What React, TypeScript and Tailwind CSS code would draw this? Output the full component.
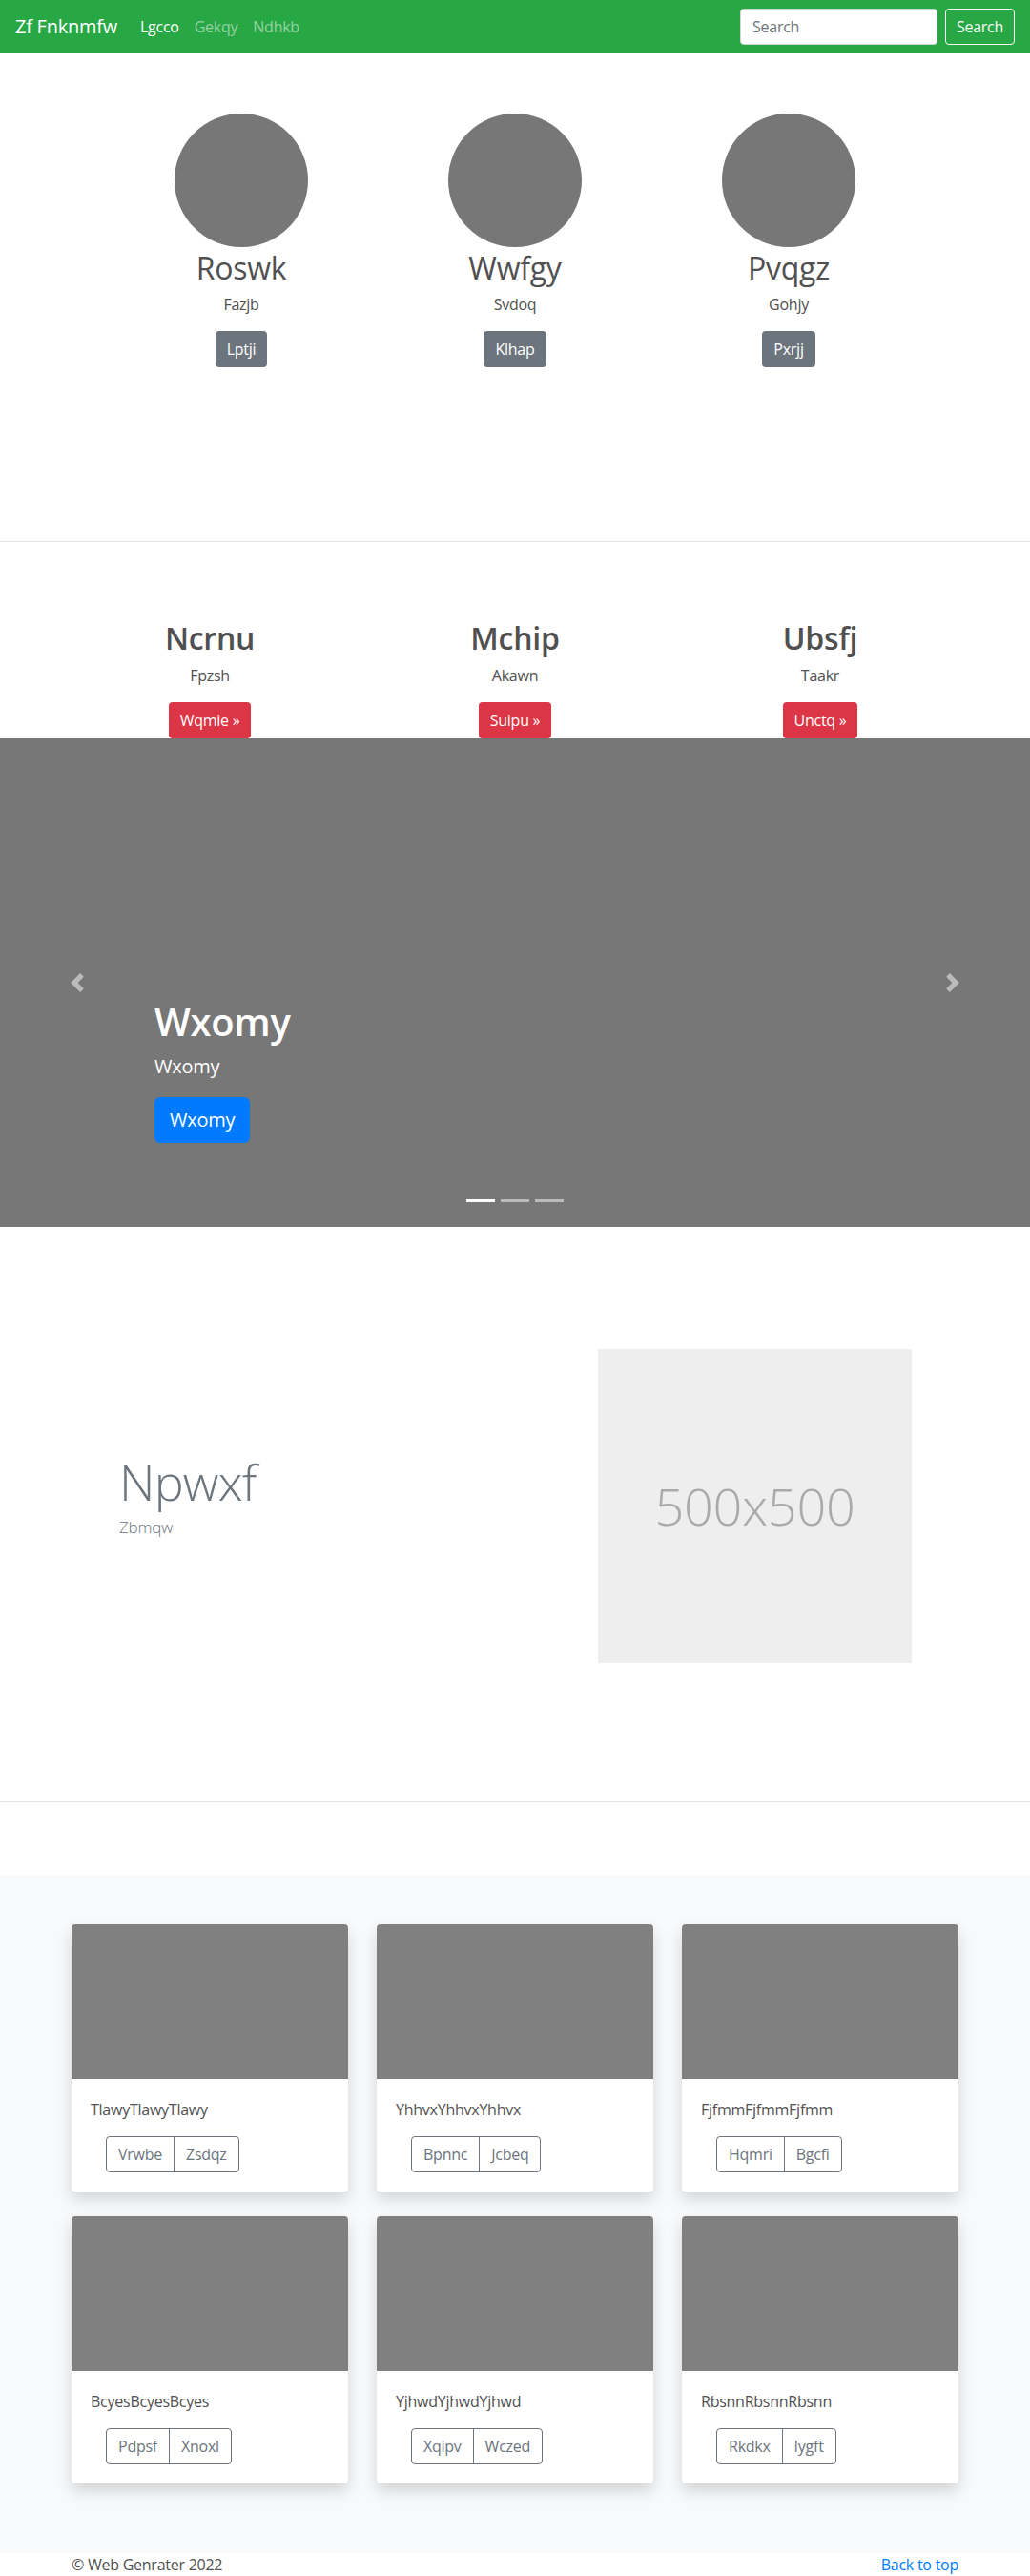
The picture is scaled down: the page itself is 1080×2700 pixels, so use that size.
import React from 'react';

const team = [
  { name: 'Roswk', sub: 'Fazjb', btn: 'Lptji' },
  { name: 'Wwfgy', sub: 'Svdoq', btn: 'Klhap' },
  { name: 'Pvqgz', sub: 'Gohjy', btn: 'Pxrjj' },
];

const features = [
  { title: 'Ncrnu', sub: 'Fpzsh', btn: 'Wqmie »' },
  { title: 'Mchip', sub: 'Akawn', btn: 'Suipu »' },
  { title: 'Ubsfj', sub: 'Taakr', btn: 'Unctq »' },
];

const cards = [
  { text: 'TlawyTlawyTlawy', a: 'Vrwbe', b: 'Zsdqz' },
  { text: 'YhhvxYhhvxYhhvx', a: 'Bpnnc', b: 'Jcbeq' },
  { text: 'FjfmmFjfmmFjfmm', a: 'Hqmri', b: 'Bgcfi' },
  { text: 'BcyesBcyesBcyes', a: 'Pdpsf', b: 'Xnoxl' },
  { text: 'YjhwdYjhwdYjhwd', a: 'Xqipv', b: 'Wczed' },
  { text: 'RbsnnRbsnnRbsnn', a: 'Rkdkx', b: 'Iygft' },
];

function Chevron({ dir }: { dir: 'prev' | 'next' }) {
  return (
    <svg width="20" height="20" viewBox="0 0 8 8" fill="#fff">
      {dir === 'prev' ? (
        <path d="M5.25 0l-4 4 4 4 1.5-1.5L4.25 4l2.5-2.5L5.25 0z" />
      ) : (
        <path d="M2.75 0l-1.5 1.5L3.75 4l-2.5 2.5L2.75 8l4-4-4-4z" />
      )}
    </svg>
  );
}

export default function App() {
  return (
    <div className="w-[1080px] bg-white font-['Open_Sans',sans-serif] tracking-[-0.25px] text-[16px] text-[#505050]">
      {/* Navbar */}
      <nav className="h-[56px] bg-[#28a745] flex items-center px-4">
        <span className="text-white text-[20px] mr-4">Zf Fnknmfw</span>
        <a className="px-2 text-white">Lgcco</a>
        <a className="px-2 text-white/50">Gekqy</a>
        <a className="px-2 text-white/50">Ndhkb</a>
        <div className="ml-auto flex items-center">
          <input
            placeholder="Search"
            className="w-[207px] h-[38px] rounded-[4px] bg-white border border-[#ced4da] px-3 text-[16px] placeholder:text-[#6c757d] outline-none"
          />
          <button className="ml-2 h-[38px] w-[73px] rounded-[4px] border border-[#f8f9fa] text-[#f8f9fa] text-[16px]">
            Search
          </button>
        </div>
      </nav>

      {/* Team */}
      <section className="h-[511px] pt-[63px]">
        <div className="w-[861px] mx-auto grid grid-cols-3">
          {team.map((t) => (
            <div key={t.name} className="flex flex-col items-center">
              <div className="w-[140px] h-[140px] rounded-full bg-[#777]" />
              <h2 className="mt-[3px] text-[32px] leading-[38px]">{t.name}</h2>
              <p className="mt-[7px] text-[16px] leading-[24px]">{t.sub}</p>
              <button className="mt-[16px] h-[38px] px-3 rounded-[4px] bg-[#6c757d] text-white text-[16px]">
                {t.btn}
              </button>
            </div>
          ))}
        </div>
      </section>

      <hr className="border-0 border-t border-black/10" />

      {/* Features */}
      <section className="pt-[82px]">
        <div className="w-[960px] mx-auto grid grid-cols-3">
          {features.map((f) => (
            <div key={f.title} className="flex flex-col items-center">
              <h2 className="text-[32px] leading-[38px] font-semibold">{f.title}</h2>
              <p className="mt-[8px] text-[16px] leading-[24px]">{f.sub}</p>
              <button className="mt-[16px] h-[38px] px-3 rounded-[4px] bg-[#dc3545] text-white text-[16px]">
                {f.btn}
              </button>
            </div>
          ))}
        </div>
      </section>

      {/* Carousel */}
      <section className="relative h-[512px] bg-[#777] flex">
        <div className="w-[162px] flex items-center justify-center opacity-50">
          <Chevron dir="prev" />
        </div>
        <div className="flex-1 flex flex-col justify-end pb-[88px] text-white">
          <h1 className="text-[40px] leading-[48px] font-semibold">Wxomy</h1>
          <p className="mt-[8px] text-[20px] leading-[30px]">Wxomy</p>
          <div className="mt-[17px]">
            <button className="h-[48px] px-4 rounded-[6px] bg-[#007bff] text-white text-[20px]">
              Wxomy
            </button>
          </div>
        </div>
        <div className="w-[162px] flex items-center justify-center opacity-50">
          <Chevron dir="next" />
        </div>
        <div className="absolute bottom-[26px] left-0 right-0 flex justify-center gap-[6px]">
          <span className="w-[30px] h-[3px] bg-white" />
          <span className="w-[30px] h-[3px] bg-white/50" />
          <span className="w-[30px] h-[3px] bg-white/50" />
        </div>
      </section>

      {/* Featurette */}
      <section className="pt-[128px] pb-[145px] pl-[125px] flex items-start">
        <div className="w-[502px] mt-[114px] text-[#6c757d]">
          <h2 className="text-[52px] leading-[50px] font-light tracking-[-0.8px]">Npwxf</h2>
          <p className="mt-[10px] text-[17px] leading-[25px] font-light">Zbmqw</p>
        </div>
        <div className="w-[329px] h-[329px] bg-[#eee] flex items-center justify-center">
          <span className="text-[#aaa] text-[54px] font-light">500x500</span>
        </div>
      </section>

      <hr className="border-0 border-t border-black/10" />
      <div className="h-[76px]" />

      {/* Album */}
      <section className="bg-[#f8f9fa] pt-[52px] pb-[73px]">
        <div className="w-[930px] mx-auto grid grid-cols-3 gap-x-[30px] gap-y-[26px]">
          {cards.map((c) => (
            <div
              key={c.text}
              className="bg-white rounded-[4px] overflow-hidden shadow-[0_8px_16px_rgba(0,0,0,0.15)]"
            >
              <div className="h-[162px] bg-[#808080]" />
              <div className="p-5">
                <p className="text-[16px] leading-[24px] text-[#505050]">{c.text}</p>
                <div className="mt-4 ml-4 inline-flex h-[38px] rounded-[4px] border border-[#6c757d] text-[#6c757d] text-[16px]">
                  <span className="px-3 flex items-center border-r border-[#6c757d]">{c.a}</span>
                  <span className="px-3 flex items-center">{c.b}</span>
                </div>
              </div>
            </div>
          ))}
        </div>
      </section>

      {/* Footer */}
      <footer className="w-[930px] mx-auto flex justify-between text-[16px] leading-[24px]">
        <span className="text-[#505050]">© Web Genrater 2022</span>
        <a className="text-[#007bff]">Back to top</a>
      </footer>
    </div>
  );
}
